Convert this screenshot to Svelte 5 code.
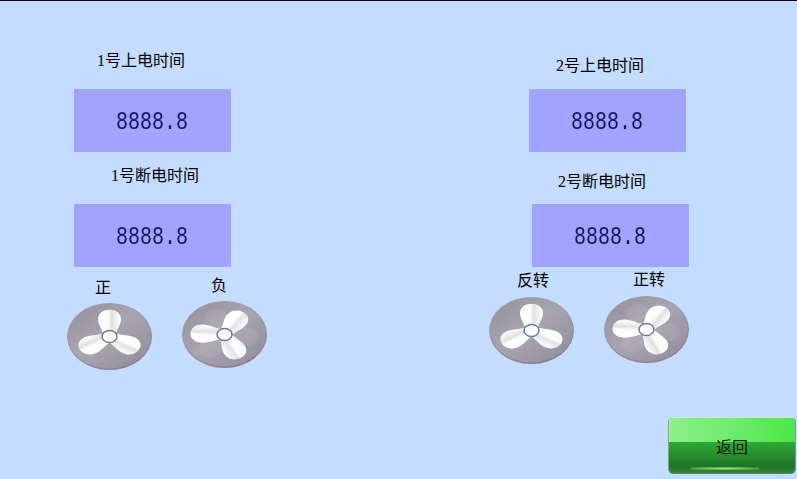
<script>
  const panels = [
    {
      side: "left",
      on: "1号上电时间",
      off: "1号断电时间",
      fans: [
        { label: "正", turned: false, top: "top-a" },
        { label: "负", turned: true, top: "top-b" },
      ],
    },
    {
      side: "right",
      on: "2号上电时间",
      off: "2号断电时间",
      fans: [
        { label: "反转", turned: false, top: "top-c" },
        { label: "正转", turned: true, top: "top-d" },
      ],
    },
  ];
  const blade = "M-7 -5C-8 -11 -11.5 -15 -11.5 -22C-11.5 -38 11.5 -38 11.5 -22C11.5 -15 8 -11 7 -5Z";
</script>

{#snippet fan(turned)}
  <svg class="fan" width="85" height="67" viewBox="0 0 85 67">
    <ellipse cx="42.5" cy="33.5" rx="42.5" ry="33.5" fill="url(#rim)" />
    <ellipse cx="42.5" cy="33" rx="41.5" ry="32.5" fill="url(#disc)" />
    <g transform="translate(42.5 33.5) scale(1 .79)">
      {#if turned}
        {#each [-22, 98, 218] as r}
          <path d={blade} transform="rotate({r})" fill="#fff" opacity=".08" />
        {/each}
      {/if}
      {#each turned ? [33, 153, 273] : [0, 120, 240] as r}
        <path d={blade} transform="rotate({r})" fill="url(#blade)" />
      {/each}
    </g>
    <ellipse cx="42.5" cy="33.5" rx="7.5" ry="6" fill="#fff" stroke="#6b7d9b" stroke-width="1.5" />
  </svg>
{/snippet}

<svg class="defs" width="0" height="0">
  <defs>
    <linearGradient id="rim" x1=".2" y1="0" x2=".8" y2="1">
      <stop offset="0" stop-color="#a8a5b0" />
      <stop offset=".7" stop-color="#8f8b97" />
      <stop offset="1" stop-color="#827e8a" />
    </linearGradient>
    <linearGradient id="disc" x1=".1" y1=".1" x2=".9" y2=".9">
      <stop offset="0" stop-color="#98939f" />
      <stop offset=".45" stop-color="#a9a5b0" />
      <stop offset="1" stop-color="#95909d" />
    </linearGradient>
    <linearGradient id="blade" gradientUnits="userSpaceOnUse" x1="-12" y1="0" x2="12" y2="0">
      <stop offset="0" stop-color="#fff" />
      <stop offset=".45" stop-color="#fbfbfb" />
      <stop offset=".6" stop-color="#e2e2e2" />
      <stop offset=".85" stop-color="#f6f6f6" />
      <stop offset="1" stop-color="#fff" />
    </linearGradient>
  </defs>
</svg>

<div class="screen">
  <div class="panels">
    {#each panels as p}
      <section class="panel {p.side}">
        <div class="label on">{p.on}</div>
        <div class="readout first"><span>8888.8</span></div>
        <div class="label off">{p.off}</div>
        <div class="readout second"><span>8888.8</span></div>
        <div class="fans">
          {#each p.fans as f}
            <div class="fan-item {f.top}">
              <div class="fan-label">{f.label}</div>
              {@render fan(f.turned)}
            </div>
          {/each}
        </div>
      </section>
    {/each}
  </div>
  <div class="footer">
    <button class="back"><span>返回</span></button>
  </div>
</div>

<style>
  :global(body) {
    margin: 0;
  }
  .defs {
    position: absolute;
  }
  .screen {
    box-sizing: border-box;
    width: 797px;
    height: 479px;
    overflow: hidden;
    display: flex;
    flex-direction: column;
    justify-content: space-between;
    background: #c4dcff;
    border-top: 1px solid #000;
    font-family: "Liberation Serif", "Noto Sans CJK SC", serif;
    color: #000;
  }
  .panels {
    display: flex;
  }
  .panel {
    width: 157px;
  }
  .panel.left {
    margin-left: 74px;
    padding-top: 50px;
  }
  .panel.right {
    margin-left: 298px;
    padding-top: 55px;
  }
  .label {
    font-size: 16px;
    line-height: 20px;
    white-space: nowrap;
  }
  .readout {
    width: 157px;
    height: 63px;
    display: flex;
    align-items: center;
    justify-content: center;
    background: #a2a2ff;
    color: #14145e;
    font-family: "Liberation Mono", monospace;
    font-size: 20px;
  }
  .readout span {
    display: block;
    transform: scaleY(1.25);
    margin: 3px 0 0 -1px;
  }
  .left .on { margin-left: 23px; }
  .left .first { margin-top: 18px; }
  .left .off { margin-left: 37px; margin-top: 14px; }
  .left .second { margin-top: 18px; }
  .right .on { margin-left: 27px; }
  .right .first { margin-top: 13px; }
  .right .off { margin-left: 29px; margin-top: 20px; }
  .right .second { margin-top: 12px; margin-left: 3px; }
  .fans {
    display: flex;
    align-items: flex-start;
    gap: 30px;
    width: 200px;
  }
  .left .fans { margin-left: -7px; }
  .right .fans { margin-left: -40px; }
  .fan-item { flex: none; }
  .top-a { margin-top: 11px; }
  .top-b { margin-top: 9px; }
  .top-c { margin-top: 4px; }
  .top-d { margin-top: 3px; }
  .fan-label {
    font-size: 16px;
    line-height: 20px;
    margin-left: 28px;
    margin-bottom: 5px;
    white-space: nowrap;
  }
  .top-b .fan-label, .top-d .fan-label { margin-left: 29px; }
  .top-c .fan-label, .top-d .fan-label { margin-bottom: 6px; }
  .fan {
    display: block;
    filter: blur(0.4px);
  }
  .footer {
    display: flex;
    justify-content: flex-end;
    padding: 0 1px 5px 0;
  }
  .back {
    position: relative;
    box-sizing: border-box;
    width: 128px;
    height: 57px;
    padding: 0;
    border: 1px solid #8f988f;
    border-top-color: #d6e4d6;
    border-bottom-color: #6f7a6f;
    border-radius: 5px;
    overflow: hidden;
    font-family: "Noto Sans CJK SC", sans-serif;
    font-size: 16px;
    color: #0a1a0a;
    background: linear-gradient(180deg, #35b935 0%, #2fa832 45%, #1f7428 88%, #2c8a33 100%);
  }
  .back::before {
    content: "";
    position: absolute;
    left: 0;
    right: 0;
    top: 0;
    height: 24px;
    background: linear-gradient(100deg, #8cf08c 0%, #72ec6f 45%, #48e848 100%);
    box-shadow: inset 1px 0 #b4f7ac;
  }
  .back::after {
    content: "";
    position: absolute;
    left: 22px;
    right: 36px;
    bottom: 3px;
    height: 3px;
    background: radial-gradient(ellipse at center, #8ef07c 0%, rgba(120, 230, 110, 0) 100%);
  }
  .back span {
    position: relative;
    z-index: 1;
    display: block;
  }
</style>
